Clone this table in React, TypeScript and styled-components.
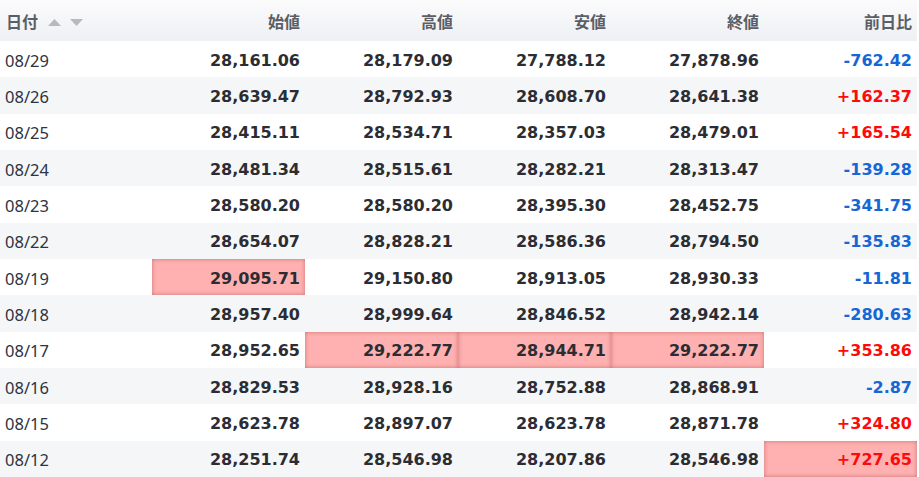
import React from "react";
import styled, { createGlobalStyle } from "styled-components";

const Global = createGlobalStyle`
  html, body { margin: 0; padding: 0; background: #fff; }
  body { font-family: "DejaVu Sans", Verdana, "Noto Sans CJK JP", sans-serif; }
`;

type Row = {
  date: string;
  open: string;
  high: string;
  low: string;
  close: string;
  diff: string;
  hi?: ("open" | "high" | "low" | "close" | "diff")[];
};

const rows: Row[] = [
  { date: "08/29", open: "28,161.06", high: "28,179.09", low: "27,788.12", close: "27,878.96", diff: "-762.42" },
  { date: "08/26", open: "28,639.47", high: "28,792.93", low: "28,608.70", close: "28,641.38", diff: "+162.37" },
  { date: "08/25", open: "28,415.11", high: "28,534.71", low: "28,357.03", close: "28,479.01", diff: "+165.54" },
  { date: "08/24", open: "28,481.34", high: "28,515.61", low: "28,282.21", close: "28,313.47", diff: "-139.28" },
  { date: "08/23", open: "28,580.20", high: "28,580.20", low: "28,395.30", close: "28,452.75", diff: "-341.75" },
  { date: "08/22", open: "28,654.07", high: "28,828.21", low: "28,586.36", close: "28,794.50", diff: "-135.83" },
  { date: "08/19", open: "29,095.71", high: "29,150.80", low: "28,913.05", close: "28,930.33", diff: "-11.81", hi: ["open"] },
  { date: "08/18", open: "28,957.40", high: "28,999.64", low: "28,846.52", close: "28,942.14", diff: "-280.63" },
  { date: "08/17", open: "28,952.65", high: "29,222.77", low: "28,944.71", close: "29,222.77", diff: "+353.86", hi: ["high", "low", "close"] },
  { date: "08/16", open: "28,829.53", high: "28,928.16", low: "28,752.88", close: "28,868.91", diff: "-2.87" },
  { date: "08/15", open: "28,623.78", high: "28,897.07", low: "28,623.78", close: "28,871.78", diff: "+324.80" },
  { date: "08/12", open: "28,251.74", high: "28,546.98", low: "28,207.86", close: "28,546.98", diff: "+727.65", hi: ["diff"] },
];

const Table = styled.table`
  width: 917px;
  border-collapse: collapse;
  border-spacing: 0;
  table-layout: fixed;
`;

const Col = styled.col<{ $w: number }>`
  width: ${(p) => p.$w}px;
`;

const HeadRow = styled.tr`
  height: 41px;
  background: linear-gradient(#fbfbfc, #eef0f3);
`;

const Th = styled.th<{ $left?: boolean }>`
  box-sizing: border-box;
  padding: 1px ${(p) => (p.$left ? "0" : "5px")} 0 ${(p) => (p.$left ? "6px" : "0")};
  text-align: ${(p) => (p.$left ? "left" : "right")};
  font-family: "Noto Sans CJK JP", sans-serif;
  font-weight: 700;
  font-size: 16px;
  color: #5a5e66;
  vertical-align: middle;
  white-space: nowrap;
`;

const SortArrows = styled.span`
  display: inline-flex;
  gap: 9px;
  margin-left: 10px;
  vertical-align: 2px;
`;

const Arrow = styled.svg`
  width: 13px;
  height: 7px;
  fill: #b6b9be;
  display: block;
`;

const BodyRow = styled.tr<{ $alt: boolean }>`
  height: 36.33px;
  background: ${(p) => (p.$alt ? "#f5f6f8" : "#ffffff")};
`;

const DateCell = styled.td`
  box-sizing: border-box;
  padding: 2px 0 0 5px;
  font-family: "Noto Sans", sans-serif;
  font-size: 16.5px;
  color: #2d3340;
  vertical-align: middle;
`;

const NumCell = styled.td<{ $hi?: boolean; $tone?: "up" | "down" }>`
  box-sizing: border-box;
  padding: 2px 5px 0 0;
  text-align: right;
  font-weight: 700;
  font-size: 16px;
  vertical-align: middle;
  white-space: nowrap;
  color: ${(p) => (p.$tone === "up" ? "#ff0a0a" : p.$tone === "down" ? "#1766d6" : "#2b2d33")};
  background: ${(p) => (p.$hi ? "#ffb0b0" : "transparent")};
  box-shadow: ${(p) => (p.$hi ? "inset 0 0 4px rgba(140, 40, 40, 0.45)" : "none")};
`;

const cols = [
  { key: "open", label: "始値" },
  { key: "high", label: "高値" },
  { key: "low", label: "安値" },
  { key: "close", label: "終値" },
] as const;

export default function App() {
  return (
    <>
      <Global />
      <Table>
        <colgroup>
          <Col $w={152} />
          <Col $w={153} />
          <Col $w={153} />
          <Col $w={153} />
          <Col $w={153} />
          <Col $w={153} />
        </colgroup>
        <thead>
          <HeadRow>
            <Th $left>
              日付
              <SortArrows>
                <Arrow viewBox="0 0 13 7">
                  <polygon points="6.5,0 13,7 0,7" />
                </Arrow>
                <Arrow viewBox="0 0 13 7">
                  <polygon points="0,0 13,0 6.5,7" />
                </Arrow>
              </SortArrows>
            </Th>
            {cols.map((c) => (
              <Th key={c.key}>{c.label}</Th>
            ))}
            <Th>前日比</Th>
          </HeadRow>
        </thead>
        <tbody>
          {rows.map((r, i) => (
            <BodyRow key={r.date} $alt={i % 2 === 1}>
              <DateCell>{r.date}</DateCell>
              {cols.map((c) => (
                <NumCell key={c.key} $hi={r.hi?.includes(c.key)}>
                  {r[c.key]}
                </NumCell>
              ))}
              <NumCell $hi={r.hi?.includes("diff")} $tone={r.diff.startsWith("+") ? "up" : "down"}>
                {r.diff}
              </NumCell>
            </BodyRow>
          ))}
        </tbody>
      </Table>
    </>
  );
}
